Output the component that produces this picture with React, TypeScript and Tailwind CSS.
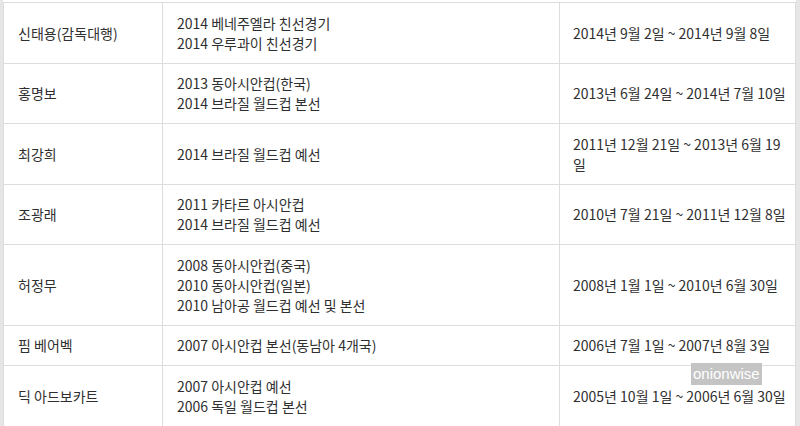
import React from 'react';

type Row = {
  name: string;
  events: string[];
  period: React.ReactNode;
};

const ROWS: Row[] = [
  {
    name: '신태용(감독대행)',
    events: ['2014 베네주엘라 친선경기', '2014 우루과이 친선경기'],
    period: '2014년 9월 2일 ~ 2014년 9월 8일',
  },
  {
    name: '홍명보',
    events: ['2013 동아시안컵(한국)', '2014 브라질 월드컵 본선'],
    period: '2013년 6월 24일 ~ 2014년 7월 10일',
  },
  {
    name: '최강희',
    events: ['2014 브라질 월드컵 예선'],
    period: (
      <>
        2011년 12월 21일 ~ 2013년 6월 19
        <br />일
      </>
    ),
  },
  {
    name: '조광래',
    events: ['2011 카타르 아시안컵', '2014 브라질 월드컵 예선'],
    period: '2010년 7월 21일 ~ 2011년 12월 8일',
  },
  {
    name: '허정무',
    events: ['2008 동아시안컵(중국)', '2010 동아시안컵(일본)', '2010 남아공 월드컵 예선 및 본선'],
    period: '2008년 1월 1일 ~ 2010년 6월 30일',
  },
  {
    name: '핌 베어벡',
    events: ['2007 아시안컵 본선(동남아 4개국)'],
    period: '2006년 7월 1일 ~ 2007년 8월 3일',
  },
  {
    name: '딕 아드보카트',
    events: ['2007 아시안컵 예선', '2006 독일 월드컵 본선'],
    period: '2005년 10월 1일 ~ 2006년 6월 30일',
  },
];

export default function App() {
  return (
    <div className="relative flex h-[426px] w-[800px] overflow-hidden bg-white font-['Noto_Sans_CJK_KR','Noto_Sans',sans-serif] text-[14px] leading-[20px] text-[#2f2f2f]">
      <div className="w-[3px] shrink-0 bg-[#e6e6e6]" />
      <div className="flex-1 pt-[2px]">
        <table className="w-full table-fixed border-collapse">
          <colgroup>
            <col className="w-[159px]" />
            <col className="w-[397px]" />
            <col />
          </colgroup>
          <tbody>
            {ROWS.map((row) => (
              <tr key={row.name}>
                <td className="border border-[#dddddd] px-[14px] py-[9.75px] align-middle whitespace-nowrap">
                  {row.name}
                </td>
                <td className="border border-[#dddddd] px-[14px] py-[9.75px] align-middle">
                  {row.events.map((e) => (
                    <div key={e} className="whitespace-nowrap">{e}</div>
                  ))}
                </td>
                <td className="border border-[#dddddd] px-[13px] py-[9.75px] align-middle whitespace-nowrap">
                  {row.period}
                </td>
              </tr>
            ))}
          </tbody>
        </table>
      </div>
      <div className="w-[4px] shrink-0 bg-[#e6e6e6]" />

      {/* watermark */}
      <div className="absolute left-[691px] top-[363px] bg-[#c4c4c4] px-[2px] font-['Liberation_Sans',sans-serif] text-[15px] leading-[22px] text-white">
        onionwise
      </div>
    </div>
  );
}
